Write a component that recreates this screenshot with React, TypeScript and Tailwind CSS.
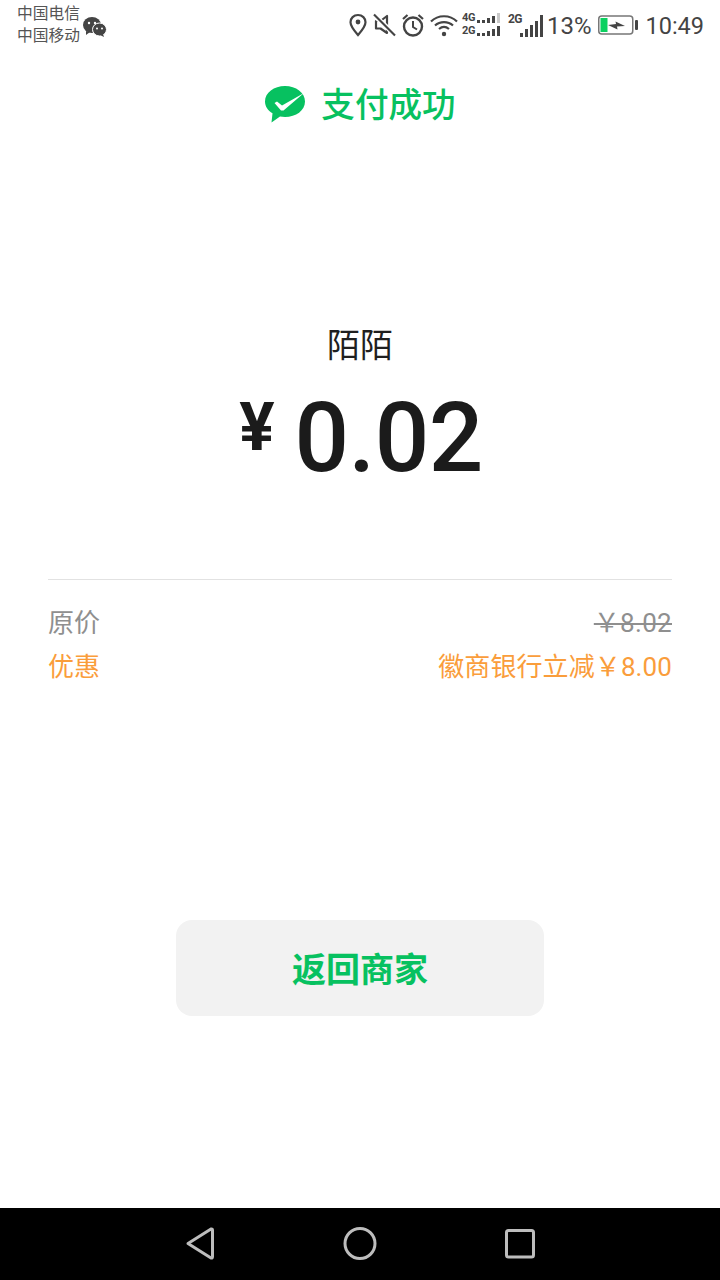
import React from "react";

const cjk = "font-['Roboto','Noto_Sans_CJK_SC',sans-serif]";

function Bars({ heights, dim }: { heights: number[]; dim?: number }) {
  return (
    <div className="flex items-end gap-[2px]">
      {heights.map((h, i) => (
        <div key={i} className={i === dim ? "w-[3px] bg-[#c9c9c9]" : "w-[3px] bg-[#444444]"} style={{ height: h }} />
      ))}
    </div>
  );
}

function DualSignal() {
  const Row = ({ label, dim }: { label: string; dim?: number }) => (
    <div className="flex items-end h-[13px] gap-[2px]">
      <span className="text-[11px] leading-[11px] font-bold text-[#444444] w-[13px] tracking-[-0.3px]">{label}</span>
      <Bars heights={[3, 3, 5, 7, 10]} dim={dim} />
    </div>
  );
  return (
    <div className="flex flex-col w-[38px] mt-[-4px]">
      <Row label="4G" dim={4} />
      <Row label="2G" />
    </div>
  );
}

export default function App() {
  return (
    <div className={`w-[720px] h-[1280px] bg-white flex flex-col ${cjk}`}>
      {/* status bar */}
      <div className="h-[50px] flex items-center justify-between pl-[17px] pr-[16px] shrink-0">
        <div className="flex items-center">
          <div className="text-[15.75px] leading-[22px] text-[#555555] w-[66px]">
            <div>中国电信</div>
            <div>中国移动</div>
          </div>
          <svg width="24" height="22" viewBox="0 0 24 22" className="mt-[3px]">
            <ellipse cx="9" cy="9" rx="9" ry="8" fill="#444444" />
            <path d="M3 15 L3 19 L7 16 Z" fill="#444444" />
            <ellipse cx="16.5" cy="13.5" rx="7" ry="6.5" fill="#444444" stroke="#fff" strokeWidth="1" />
            <path d="M20 18 L21 21 L17 19 Z" fill="#444444" />
            <circle cx="6" cy="7" r="1.2" fill="#fff" />
            <circle cx="12" cy="7" r="1.2" fill="#fff" />
            <circle cx="14" cy="12.5" r="1" fill="#fff" />
            <circle cx="19" cy="12.5" r="1" fill="#fff" />
          </svg>
        </div>
        <div className="flex items-center">
          <svg width="18" height="24" viewBox="0 0 18 24" className="mr-[6px]">
            <path d="M9 2 C4.6 2 1.5 5.2 1.5 9.2 C1.5 13.5 6 18.5 9 22 C12 18.5 16.5 13.5 16.5 9.2 C16.5 5.2 13.4 2 9 2 Z" fill="none" stroke="#444444" strokeWidth="2.2" />
            <circle cx="9" cy="9" r="2.4" fill="#444444" />
          </svg>
          <svg width="23" height="24" viewBox="0 0 23 24" className="mr-[5px]">
            <path d="M3 8 H7.5 L14 3 V20 L7.5 15.5 H3 Z" fill="none" stroke="#444444" strokeWidth="2.2" strokeLinejoin="round" />
            <path d="M1 2 L22 22" stroke="#fff" strokeWidth="5" />
            <path d="M1 1.5 L22 22.5" stroke="#444444" strokeWidth="2.2" />
          </svg>
          <svg width="24" height="24" viewBox="0 0 24 24" className="mr-[5px]">
            <circle cx="12" cy="13.5" r="9" fill="none" stroke="#444444" strokeWidth="2.4" />
            <path d="M12 8 V14 L16 16.5" fill="none" stroke="#444444" strokeWidth="2" />
            <path d="M2 6 L6.5 2 M22 6 L17.5 2" stroke="#444444" strokeWidth="2.2" />
          </svg>
          <svg width="28" height="24" viewBox="0 0 28 24" className="mr-[4px]">
            <path d="M1 8.5 C8 1.5 20 1.5 27 8.5" fill="none" stroke="#444444" strokeWidth="2.2" />
            <path d="M5 12.5 C10 8 18 8 23 12.5" fill="none" stroke="#444444" strokeWidth="2.2" />
            <path d="M9 16 C12 13.5 16 13.5 19 16" fill="none" stroke="#444444" strokeWidth="2.2" />
            <circle cx="14" cy="21" r="2.2" fill="#444444" />
          </svg>
          <DualSignal />
          <div className="ml-[8px] mr-[4px] flex items-end h-[24px] w-[35px] relative">
            <span className="absolute left-0 top-[-1px] text-[12px] leading-[14px] font-bold text-[#444444] tracking-[-0.5px]">2G</span>
            <div className="ml-[12px] flex items-end gap-[2px]">
              {[4, 8, 12, 16, 22].map((h, i) => (
                <div key={i} className="w-[3px] bg-[#444444]" style={{ height: h }} />
              ))}
            </div>
          </div>
          <span className="text-[24px] leading-[30px] text-[#444444] mr-[7px] mt-[2px]">13%</span>
          <svg width="40" height="22" viewBox="0 0 40 22" className="mr-[7px]">
            <rect x="0.75" y="2" width="34" height="18" rx="3" fill="none" stroke="#777777" strokeWidth="1.5" />
            <rect x="2.5" y="4" width="7" height="14" fill="#0bd160" />
            <path d="M10 11 L18 10 L17.5 7.5 L27 12 L19 12.5 L19.5 15.5 Z" fill="#444444" />
            <rect x="37" y="6" width="3" height="10" rx="1" fill="#444444" />
          </svg>
          <span className="text-[23.5px] leading-[30px] text-[#444444] mt-[1px]">10:49</span>
        </div>
      </div>

      {/* header */}
      <div className="mt-[30px] h-[50px] flex items-center justify-center shrink-0">
        <svg width="42" height="40" viewBox="0 0 42 40" className="mr-[15px]">
          <path d="M21 1 C10 1 1 7.5 1 16.5 C1 21.5 4 25.5 8.5 28.3 L7.5 37.5 L16 31.6 C17.5 31.9 19 32 21 32 C32 32 41 25.5 41 16.5 C41 7.5 32 1 21 1 Z" fill="#07c160" />
          <path d="M10.5 18 L13 16.5 L18 20.5 L40 8 L19.5 25.5 L17 25.5 Z" fill="#fff" />
        </svg>
        <span className="text-[33.6px] leading-[50px] font-medium text-[#07c160] pt-[1px]">支付成功</span>
      </div>

      {/* merchant */}
      <div className="mt-[191px] text-center text-[33px] leading-[50px] text-[#1f1f1f] shrink-0">陌陌</div>

      {/* amount */}
      <div className="mt-[15px] flex items-center justify-center h-[104px] shrink-0 text-[#1b1b1b] pl-[2px]">
        <span className="text-[66px] leading-[64px] font-bold mr-[20px] mt-[-20px]">¥</span>
        <span className="text-[96px] leading-[104px] font-medium tracking-[-0.5px]">0.02</span>
      </div>

      {/* divider */}
      <div className="mt-[89px] mx-[48px] h-px bg-[#e2e2e2] shrink-0" />

      {/* rows */}
      <div className="mt-[21px] mx-[48px] flex flex-col shrink-0 text-[26px] leading-[44px]">
        <div className="flex justify-between text-[#8f8f8f]">
          <span>原价</span>
          <span className="line-through tracking-[0.3px]">￥8.02</span>
        </div>
        <div className="flex justify-between text-[#fa9d3b]">
          <span>优惠</span>
          <span className="tracking-[0.1px]">徽商银行立减￥8.00</span>
        </div>
      </div>

      {/* button */}
      <div className="mt-[231px] flex justify-center shrink-0">
        <div className="w-[368px] h-[96px] rounded-[16px] bg-[#f2f2f2] flex items-center justify-center text-[34px] font-bold text-[#07c160] pt-[4px]">
          返回商家
        </div>
      </div>

      {/* spacer */}
      <div className="flex-1" />

      {/* nav */}
      <div className="h-[72px] bg-black flex items-center justify-center shrink-0">
        <div className="flex items-center gap-[124px]">
          <svg width="36" height="36" viewBox="0 0 36 36">
            <path d="M6 17.5 L29 3 Q30.5 2.5 30.5 4.5 V30.5 Q30.5 32.5 29 32 Z" fill="none" stroke="#bdbdbd" strokeWidth="3" strokeLinejoin="round" />
          </svg>
          <svg width="36" height="36" viewBox="0 0 36 36">
            <circle cx="18" cy="17.5" r="15" fill="none" stroke="#bdbdbd" strokeWidth="3" />
          </svg>
          <svg width="36" height="36" viewBox="0 0 36 36">
            <rect x="4.5" y="4.5" width="27" height="26.5" rx="2" fill="none" stroke="#bdbdbd" strokeWidth="3" />
          </svg>
        </div>
      </div>
    </div>
  );
}
